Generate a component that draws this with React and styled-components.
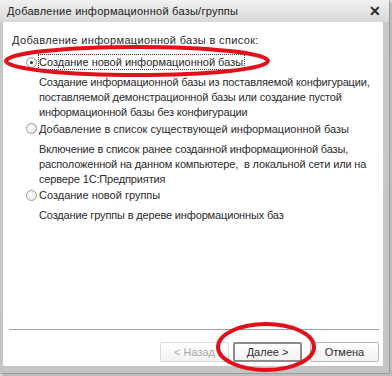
import React from "react";
import styled, { createGlobalStyle } from "styled-components";

const Global = createGlobalStyle`
  html, body { margin: 0; padding: 0; background: #dcdcdc; }
  body { font-family: "Liberation Sans", Arial, sans-serif; }
`;

const Page = styled.div`
  position: relative;
  width: 392px;
  height: 376px;
  overflow: hidden;
  background: #d4d4d4;
`;

const Window = styled.div`
  width: 389px;
  height: 373px;
  display: flex;
  flex-direction: column;
  background: linear-gradient(to bottom, #e6e6e6 0px, #c9c9c9 22px, #c4c4c4 100%);
  box-shadow: 1px 1px 0 #9a9a9a, 3px 3px 0 #bdbdbd;
`;

const TitleBar = styled.div`
  height: 22px;
  display: flex;
  align-items: center;
  justify-content: space-between;
  padding: 0 8px 0 7px;
  background: linear-gradient(to bottom, #f2f2f2, #d8d8d8);
  font-size: 11px;
  letter-spacing: 0.25px;
  color: #202020;
  white-space: nowrap;
`;

const Close = styled.span`
  font-size: 14px;
  font-weight: bold;
  color: #2a2a2a;
  line-height: 1;
`;

const Client = styled.div`
  flex: 1;
  margin: 0 6px 7px 3px;
  background: #ffffff;
  display: flex;
  flex-direction: column;
  color: #2b2b2b;
  font-size: 11px;
  line-height: 15px;
  white-space: nowrap;
`;

const Content = styled.div`
  flex: 1;
  padding: 11px 0 0 9px;
  display: flex;
  flex-direction: column;
`;

const Heading = styled.div`
  margin-bottom: 6px;
  letter-spacing: 0.35px;
`;

const Option = styled.label`
  display: flex;
  align-items: center;
  gap: 1px;
  margin-left: 14px;
  height: 16px;
`;

const Radio = styled.span`
  width: 11px;
  height: 11px;
  border-radius: 50%;
  border: 1px solid #9a9a9a;
  background: radial-gradient(circle at 40% 40%, #ffffff, #e6e6e6);
  display: flex;
  align-items: center;
  justify-content: center;
  box-sizing: border-box;
  flex: none;
  &::after {
    content: "";
    display: ${(p) => (p.$checked ? "block" : "none")};
    width: 3px;
    height: 3px;
    border-radius: 50%;
    background: #333;
  }
`;

const Label = styled.span`
  padding: 0 1px 0 0;
  border: 1px dotted ${(p) => (p.$focused ? "#333" : "transparent")};
  line-height: 14px;
`;

const Desc = styled.div`
  margin: 5px 0 0.5px 27px;
  letter-spacing: -0.15px;
`;

const Footer = styled.div`
  padding: 0 4px 4px 6px;
`;

const Separator = styled.div`
  height: 1px;
  background: #a0a0a0;
  margin-bottom: 12px;
`;

const Buttons = styled.div`
  display: flex;
  justify-content: flex-end;
  gap: 4px;
`;

const Button = styled.button`
  width: 69px;
  height: 20px;
  box-sizing: border-box;
  font-family: inherit;
  font-size: 11px;
  border-radius: 2px;
  padding: 0;
  background: linear-gradient(to bottom, #ffffff, #f2f2f2);
  color: ${(p) => (p.disabled ? "#a8a8a8" : "#2b2b2b")};
  border: ${(p) =>
    p.$default ? "2px solid #8c8c8c" : p.disabled ? "1px solid #dadada" : "1px solid #b8b8b8"};
  margin-left: ${(p) => (p.$gapLeft ? "4px" : "0")};
`;

const Annot = styled.svg`
  position: absolute;
  left: 0;
  top: 0;
  pointer-events: none;
`;

export default function App() {
  return (
    <Page>
      <Global />
      <Window>
        <TitleBar>
          <span>Добавление информационной базы/группы</span>
          <Close>✕</Close>
        </TitleBar>
        <Client>
          <Content>
            <Heading>Добавление информационной базы в список:</Heading>
            <Option>
              <Radio $checked />
              <Label $focused>Создание новой информационной базы</Label>
            </Option>
            <Desc>
              Создание информационной базы из поставляемой конфигурации,
              <br />
              поставляемой демонстрационной базы или создание пустой
              <br />
              информационной базы без конфигурации
            </Desc>
            <Option>
              <Radio />
              <Label>Добавление в список существующей информационной базы</Label>
            </Option>
            <Desc>
              Включение в список ранее созданной информационной базы,
              <br />
              расположенной на данном компьютере,&nbsp; в локальной сети или на
              <br />
              сервере 1С:Предприятия
            </Desc>
            <Option>
              <Radio />
              <Label>Создание новой группы</Label>
            </Option>
            <Desc>Создание группы в дереве информационных баз</Desc>
          </Content>
          <Footer>
            <Separator />
            <Buttons>
              <Button disabled>&lt; Назад</Button>
              <Button $default>Далее &gt;</Button>
              <Button $gapLeft>Отмена</Button>
            </Buttons>
          </Footer>
        </Client>
      </Window>
      <Annot width="392" height="376" viewBox="0 0 392 376">
        <ellipse cx="137" cy="61" rx="131" ry="14" fill="none" stroke="#e3101c" strokeWidth="4" />
        <ellipse cx="266" cy="347" rx="48" ry="23" fill="none" stroke="#e3101c" strokeWidth="4" />
      </Annot>
    </Page>
  );
}
